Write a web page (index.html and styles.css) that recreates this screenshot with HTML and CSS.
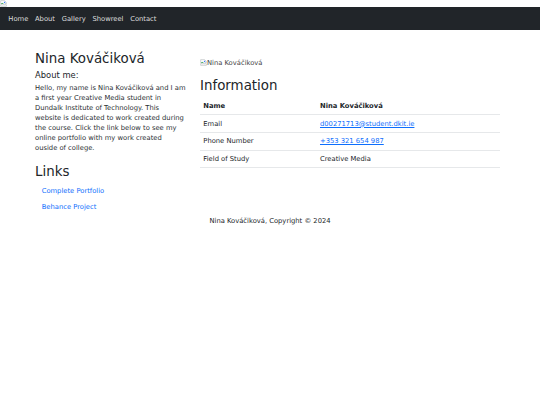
FILE: index.html
```html
<!DOCTYPE html>
<html lang="en">
<head>
    <meta charset="UTF-8">
    <meta name="viewport" content="width=device-width, initial-scale=1.0">
    <title>Nina Kováčiková</title>
    <link rel="stylesheet" href="styles.css">
</head>
<body>
    <div class="top-img">
        <svg class="broken" viewBox="0 0 16 16" width="7" height="7">
            <path d="M1.5 1.5h9l4 4v4l-2 -1.5 -2 2 -2 -2 -2 2 -2 -2 -3 2z" fill="#fff" stroke="#9aa0a6"/>
            <path d="M2 9l3-3 3 3z" fill="#34a853"/>
            <rect x="9" y="4" width="3" height="3" fill="#4285f4"/>
            <path d="M1.5 12l3-2 2 2 2-2 2 2 2-2 2 1.5v3h-13z" fill="#fff" stroke="#9aa0a6"/>
        </svg>
    </div>

    <nav class="navbar">
        <ul class="nav-list">
            <li><a href="#">Home</a></li>
            <li><a href="#">About</a></li>
            <li><a href="#">Gallery</a></li>
            <li><a href="#">Showreel</a></li>
            <li><a href="#">Contact</a></li>
        </ul>
    </nav>

    <div class="container">
        <div class="col-left">
            <h2>Nina Kováčiková</h2>
            <h5>About me:</h5>
            <p>Hello, my name is Nina Kováčiková and I am a first year Creative Media student in Dundalk Institute of Technology. This website is dedicated to work created during the course. Click the link below to see my online portfolio with my work created ouside of college.</p>
            <h2 class="links-title">Links</h2>
            <ul class="link-list">
                <li><a href="#">Complete Portfolio</a></li>
                <li><a href="#">Behance Project</a></li>
            </ul>
        </div>

        <div class="col-right">
            <div class="photo">
                <svg class="broken" viewBox="0 0 16 16" width="7" height="7">
                    <path d="M1.5 1.5h9l4 4v4l-2 -1.5 -2 2 -2 -2 -2 2 -2 -2 -3 2z" fill="#fff" stroke="#9aa0a6"/>
                    <path d="M2 9l3-3 3 3z" fill="#34a853"/>
                    <rect x="9" y="4" width="3" height="3" fill="#4285f4"/>
                    <path d="M1.5 12l3-2 2 2 2-2 2 2 2-2 2 1.5v3h-13z" fill="#fff" stroke="#9aa0a6"/>
                </svg>Nina Kováčiková
            </div>
            <h2>Information</h2>
            <table class="info">
                <tr>
                    <th>Name</th>
                    <th>Nina Kováčiková</th>
                </tr>
                <tr>
                    <td>Email</td>
                    <td><a href="#">d00271713@student.dkit.ie</a></td>
                </tr>
                <tr>
                    <td>Phone Number</td>
                    <td><a href="#">+353 321 654 987</a></td>
                </tr>
                <tr>
                    <td>Field of Study</td>
                    <td>Creative Media</td>
                </tr>
            </table>
        </div>
    </div>

    <footer class="footer">Nina Kováčiková, Copyright © 2024</footer>
</body>
</html>
```

FILE: styles.css
```css
body {
    margin: 0;
    font-family: "DejaVu Sans", sans-serif;
    font-size: 6.78px;
    line-height: 10px;
    color: #212529;
    background-color: #fff;
}

.top-img {
    height: 7px;
    line-height: 0;
}

.broken {
    display: inline-block;
    vertical-align: top;
}

.navbar {
    background-color: #212529;
    padding: 3.33px 5px;
}

.nav-list {
    display: flex;
    list-style: none;
    margin: 0;
    padding: 0;
}

.nav-list a {
    display: block;
    padding: 3.33px 3.33px;
    color: rgba(255, 255, 255, 0.85);
    text-decoration: none;
}

.container {
    display: grid;
    grid-template-columns: 151px 300px;
    column-gap: 14px;
    padding-left: 35px;
    margin-top: 20.5px;
}

h2 {
    font-size: 13.4px;
    font-weight: 400;
    line-height: 16px;
    margin: 0 0 3.33px;
}

h5 {
    font-size: 8.4px;
    font-weight: 400;
    line-height: 10px;
    margin: 0 0 3.33px;
}

p {
    margin: 0 0 6.67px;
    color: #2b2f33;
}

.links-title {
    margin: 10.5px 0 2.5px;
}

.link-list {
    list-style: none;
    margin: 0;
    padding: 0;
}

.link-list a {
    display: block;
    padding: 3.33px 6.67px;
    color: #0d6efd;
    text-decoration: none;
}

.photo {
    margin: 7.5px 0 10px;
    color: #444;
}

.photo .broken {
    margin-top: 1px;
}

.info {
    width: 100%;
    border-collapse: collapse;
}

.info th,
.info td {
    text-align: left;
    padding: 3.33px 3.33px;
    border-bottom: 1px solid #e6e8ea;
}

.info th {
    font-weight: 700;
}

.info th:first-child,
.info td:first-child {
    width: 110px;
}

.info a {
    color: #0d6efd;
}

.footer {
    text-align: center;
}
```
